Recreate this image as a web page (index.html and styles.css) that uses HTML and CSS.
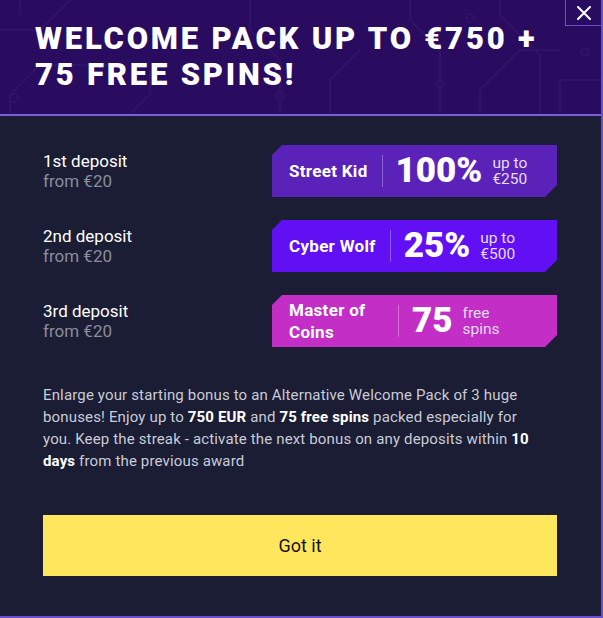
FILE: index.html
```html
<!DOCTYPE html>
<html lang="en">
<head>
    <meta charset="UTF-8">
    <meta name="viewport" content="width=device-width, initial-scale=1.0">
    <title>Welcome Pack</title>
    <link rel="stylesheet" href="styles.css">
</head>
<body>
    <div class="modal">
        <!-- Header -->
        <header class="modal-header">
            <svg class="circuit" width="601" height="114" viewBox="0 0 601 114" fill="none" stroke="#3a1f78" stroke-width="1.5">
                <path d="M0 30 L40 30 L70 0"/>
                <path d="M10 114 L10 95 L40 65 L120 65"/>
                <circle cx="14" cy="98" r="4"/>
                <path d="M130 114 L150 94 L150 70"/>
                <path d="M250 0 L250 30 L280 60 L280 114"/>
                <circle cx="280" cy="96" r="4"/>
                <path d="M330 114 L330 80 L360 50"/>
                <path d="M410 0 L410 20 L440 50 L440 114"/>
                <circle cx="440" cy="84" r="4"/>
                <path d="M480 114 L480 90 L520 50 L560 50"/>
                <path d="M500 0 L500 15 L540 55 L540 114"/>
                <circle cx="585" cy="52" r="4"/>
                <path d="M560 114 L560 80 L601 80"/>
                <path d="M20 0 L20 15"/>
                <circle cx="470" cy="18" r="4"/>
            </svg>
            <h1 class="title">WELCOME PACK UP TO €750 +<br>75 FREE SPINS!</h1>
            <button class="close" aria-label="Close">
                <svg width="14" height="14" viewBox="0 0 14 14" stroke="#fff" stroke-width="2" stroke-linecap="round">
                    <path d="M1 1 L13 13 M13 1 L1 13"/>
                </svg>
            </button>
        </header>

        <!-- Bonuses -->
        <div class="modal-body">
            <div class="bonus-list">
                <div class="bonus-row">
                    <div class="deposit">
                        <div class="deposit-name">1st deposit</div>
                        <div class="deposit-min">from €20</div>
                    </div>
                    <div class="badge badge-street">
                        <span class="badge-name">Street Kid</span>
                        <span class="badge-sep"></span>
                        <span class="badge-value">100%</span>
                        <span class="badge-note">up to<br>€250</span>
                    </div>
                </div>
                <div class="bonus-row">
                    <div class="deposit">
                        <div class="deposit-name">2nd deposit</div>
                        <div class="deposit-min">from €20</div>
                    </div>
                    <div class="badge badge-wolf">
                        <span class="badge-name">Cyber Wolf</span>
                        <span class="badge-sep"></span>
                        <span class="badge-value">25%</span>
                        <span class="badge-note">up to<br>€500</span>
                    </div>
                </div>
                <div class="bonus-row">
                    <div class="deposit">
                        <div class="deposit-name">3rd deposit</div>
                        <div class="deposit-min">from €20</div>
                    </div>
                    <div class="badge badge-coins">
                        <span class="badge-name badge-name-wide">Master of<br>Coins</span>
                        <span class="badge-sep"></span>
                        <span class="badge-value">75</span>
                        <span class="badge-note">free<br>spins</span>
                    </div>
                </div>
            </div>

            <p class="info">
                Enlarge your starting bonus to an Alternative Welcome Pack of 3 huge
                bonuses! Enjoy up to <b>750 EUR</b> and <b>75 free spins</b> packed especially for
                you. Keep the streak - activate the next bonus on any deposits within <b>10
                days</b> from the previous award
            </p>

            <button class="got-it">Got it</button>
        </div>
    </div>
</body>
</html>
```

FILE: styles.css
```css
* {
    margin: 0;
    padding: 0;
    box-sizing: border-box;
}

body {
    font-family: Roboto, "Liberation Sans", sans-serif;
    background: #1a1d33;
    color: #fff;
}

.modal {
    width: 603px;
    height: 618px;
    background: #1a1d33;
    border-right: 2px solid #6a4fcf;
    border-bottom: 2px solid #6a4fcf;
    display: flex;
    flex-direction: column;
}

/* Header */
.modal-header {
    position: relative;
    height: 116px;
    background: #290c5f;
    border-bottom: 2px solid #7a5fd8;
    padding: 21px 0 0 35px;
    overflow: hidden;
}

.circuit {
    position: absolute;
    top: 0;
    left: 0;
    opacity: 0.55;
}

.title {
    position: relative;
    font-family: Roboto, "Liberation Sans", sans-serif;
    font-weight: 900;
    font-size: 31px;
    line-height: 36px;
    letter-spacing: 2.8px;
    color: #fff;
}

.close {
    position: absolute;
    top: 0;
    right: 0;
    width: 36px;
    height: 26px;
    display: flex;
    align-items: center;
    justify-content: center;
    background: none;
    border: none;
    border-left: 1px solid #6a4fcf;
    border-bottom: 1px solid #6a4fcf;
    cursor: pointer;
}

/* Body */
.modal-body {
    padding: 29px 44px 0 43px;
}

.bonus-list {
    display: flex;
    flex-direction: column;
    gap: 23px;
}

.bonus-row {
    display: flex;
    align-items: center;
    justify-content: space-between;
}

.deposit-name {
    font-size: 17px;
    line-height: 20px;
    color: #fff;
}

.deposit-min {
    font-size: 17px;
    line-height: 20px;
    color: #8a8d9e;
}

.badge {
    width: 285px;
    height: 52px;
    display: flex;
    align-items: center;
    padding-left: 17px;
    clip-path: polygon(10px 0, 100% 0, 100% calc(100% - 12px), calc(100% - 12px) 100%, 0 100%, 0 10px);
}

.badge-street {
    background: #5b22b9;
}

.badge-wolf {
    background: #6010f2;
}

.badge-coins {
    background: #c22ec6;
}

.badge-name {
    font-size: 17px;
    font-weight: 700;
    line-height: 22px;
    letter-spacing: 0.3px;
}

.badge-name-wide {
    width: 95px;
}

.badge-sep {
    width: 1px;
    height: 32px;
    background: rgba(255, 255, 255, 0.3);
    margin: 0 13px 0 14px;
}

.badge-value {
    font-size: 35px;
    font-weight: 900;
    line-height: 38px;
}

.badge-note {
    margin-left: 10px;
    font-size: 15.5px;
    line-height: 16px;
    color: #e6dcf8;
}

.info {
    max-width: 490px;
    margin-top: 37px;
    font-size: 15px;
    line-height: 22px;
    letter-spacing: 0.15px;
    color: #c9cbd8;
}

.info b {
    color: #fff;
}

.got-it {
    display: block;
    width: 514px;
    height: 61px;
    margin-top: 43px;
    background: #ffe65c;
    border: none;
    font-family: Roboto, "Liberation Sans", sans-serif;
    font-size: 18px;
    color: #111;
    cursor: pointer;
}
```
